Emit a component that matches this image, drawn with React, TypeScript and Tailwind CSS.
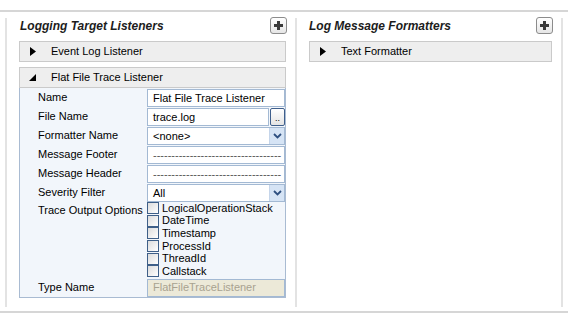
import React from "react";

const font = { fontFamily: '"Liberation Sans", Arial, sans-serif' };

function PlusButton() {
  return (
    <div className="flex h-[17px] w-[17px] items-center justify-center rounded-[3px] border border-[#8c8c8c] bg-gradient-to-b from-white to-[#e6e6e6]">
      <svg width="11" height="11" viewBox="0 0 11 11">
        <path d="M4 1h3v3h3v3H7v3H4V7H1V4h3z" fill="#3a3a3a" />
      </svg>
    </div>
  );
}

function Collapsed() {
  return (
    <svg width="6" height="9" viewBox="0 0 6 9" className="shrink-0">
      <path d="M0 0L6 4.5L0 9z" fill="#000" />
    </svg>
  );
}

function Expanded() {
  return (
    <svg width="7" height="7" viewBox="0 0 7 7" className="shrink-0">
      <path d="M7 0L7 7L0 7z" fill="#000" />
    </svg>
  );
}

function Bar({ label, open }: { label: string; open?: boolean }) {
  return (
    <div className="flex h-[21px] items-center border border-[#cacaca] bg-[#eeeeee] text-[11px] text-black">
      <div className="flex w-[31px] justify-end pr-[15px]">{open ? <Expanded /> : <Collapsed />}</div>
      <span>{label}</span>
    </div>
  );
}

function Chevron() {
  return (
    <div className="flex h-full w-[15px] items-center justify-center border-l border-[#c5d5ea] bg-[#d6e4f5]">
      <svg width="9" height="6" viewBox="0 0 9 6">
        <path d="M1 1l3.5 3.5L8 1" stroke="#2e4f80" strokeWidth="1.8" fill="none" />
      </svg>
    </div>
  );
}

function Field({ children, select, browse }: { children: React.ReactNode; select?: boolean; browse?: boolean }) {
  return (
    <div className="flex h-[18px] w-[138px]">
      <div className="flex h-full min-w-0 flex-1 items-center overflow-hidden border border-[#a3b9d3] bg-white">
        <span className="flex-1 overflow-hidden whitespace-nowrap pl-[5px] text-[11px] text-black">{children}</span>
        {select && <Chevron />}
      </div>
      {browse && (
        <div className="ml-[1px] flex h-full w-[15px] items-end justify-center rounded-[2px] border border-[#3f5f8c] bg-gradient-to-b from-white to-[#e4e4e4] pb-[2px] text-[9px] leading-none text-black">
          ..
        </div>
      )}
    </div>
  );
}

function Row({ label, children }: { label: string; children: React.ReactNode }) {
  return (
    <div className="flex items-start">
      <div className="w-[127px] pl-[18px] pt-[1px] text-[11px] leading-[14px] text-black">{label}</div>
      {children}
    </div>
  );
}

const dashes = "-----------------------------------";
const options = ["LogicalOperationStack", "DateTime", "Timestamp", "ProcessId", "ThreadId", "Callstack"];

export default function App() {
  return (
    <div className="h-[317px] w-[568px] overflow-hidden bg-white" style={font}>
      <div className="pt-[10px]">
        <div className="h-[2px] bg-[#d6d6d6]" />
      </div>
      <div className="flex pl-[5px] pt-[6px]">
        <div className="h-[289px] w-[292px] border-x-2 border-[#e3e3e3] pl-[12px] pr-[8px]">
          <div className="flex h-[23px] items-start justify-between">
            <span className="pl-[1px] text-[12px] font-bold italic leading-[16px] text-[#1c1c1c]">Logging Target Listeners</span>
            <div className="-mt-[1px]">
              <PlusButton />
            </div>
          </div>
          <div className="w-[267px]">
            <Bar label="Event Log Listener" />
            <div className="mt-[5px]">
              <Bar label="Flat File Trace Listener" open />
            </div>
            <div className="flex h-[210px] flex-col border border-t-0 border-[#a9bbd2] bg-[#f2f6fb] pt-[1px]">
              <div className="flex flex-col gap-[1px]">
                <Row label="Name"><Field>Flat File Trace Listener</Field></Row>
                <Row label="File Name"><Field browse>trace.log</Field></Row>
                <Row label="Formatter Name"><Field select>&lt;none&gt;</Field></Row>
                <Row label="Message Footer"><Field><span className="text-[#555]">{dashes}</span></Field></Row>
                <Row label="Message Header"><Field><span className="text-[#555]">{dashes}</span></Field></Row>
                <Row label="Severity Filter"><Field select>All</Field></Row>
              </div>
              <Row label="Trace Output Options">
                <div className="flex flex-col">
                  {options.map((o) => (
                    <div key={o} className="flex h-[12.6px] items-center">
                      <div className="h-[12px] w-[12px] border border-[#3e5f88] bg-gradient-to-br from-[#dcdcdc] to-white" />
                      <span className="pl-[3px] text-[11px] leading-none text-black">{o}</span>
                    </div>
                  ))}
                </div>
              </Row>
              <div className="mt-[1px]">
                <Row label="Type Name">
                  <div className="flex h-[18px] w-[138px] items-center border border-[#a3b9d3] bg-[#ece9d8] pl-[5px] text-[11px] text-[#a8a290]">
                    FlatFileTraceListener
                  </div>
                </Row>
              </div>
            </div>
          </div>
        </div>
        <div className="h-[289px] w-[266px] border-r-2 border-[#e3e3e3] pl-[12px] pr-[8px]">
          <div className="flex h-[23px] items-start justify-between">
            <span className="text-[12px] font-bold italic leading-[16px] text-[#1c1c1c]">Log Message Formatters</span>
            <div className="-mt-[1px]">
              <PlusButton />
            </div>
          </div>
          <div className="w-[243px]">
            <Bar label="Text Formatter" />
          </div>
        </div>
      </div>
      <div className="pt-[4px]">
        <div className="h-[2px] bg-[#d6d6d6]" />
      </div>
    </div>
  );
}
